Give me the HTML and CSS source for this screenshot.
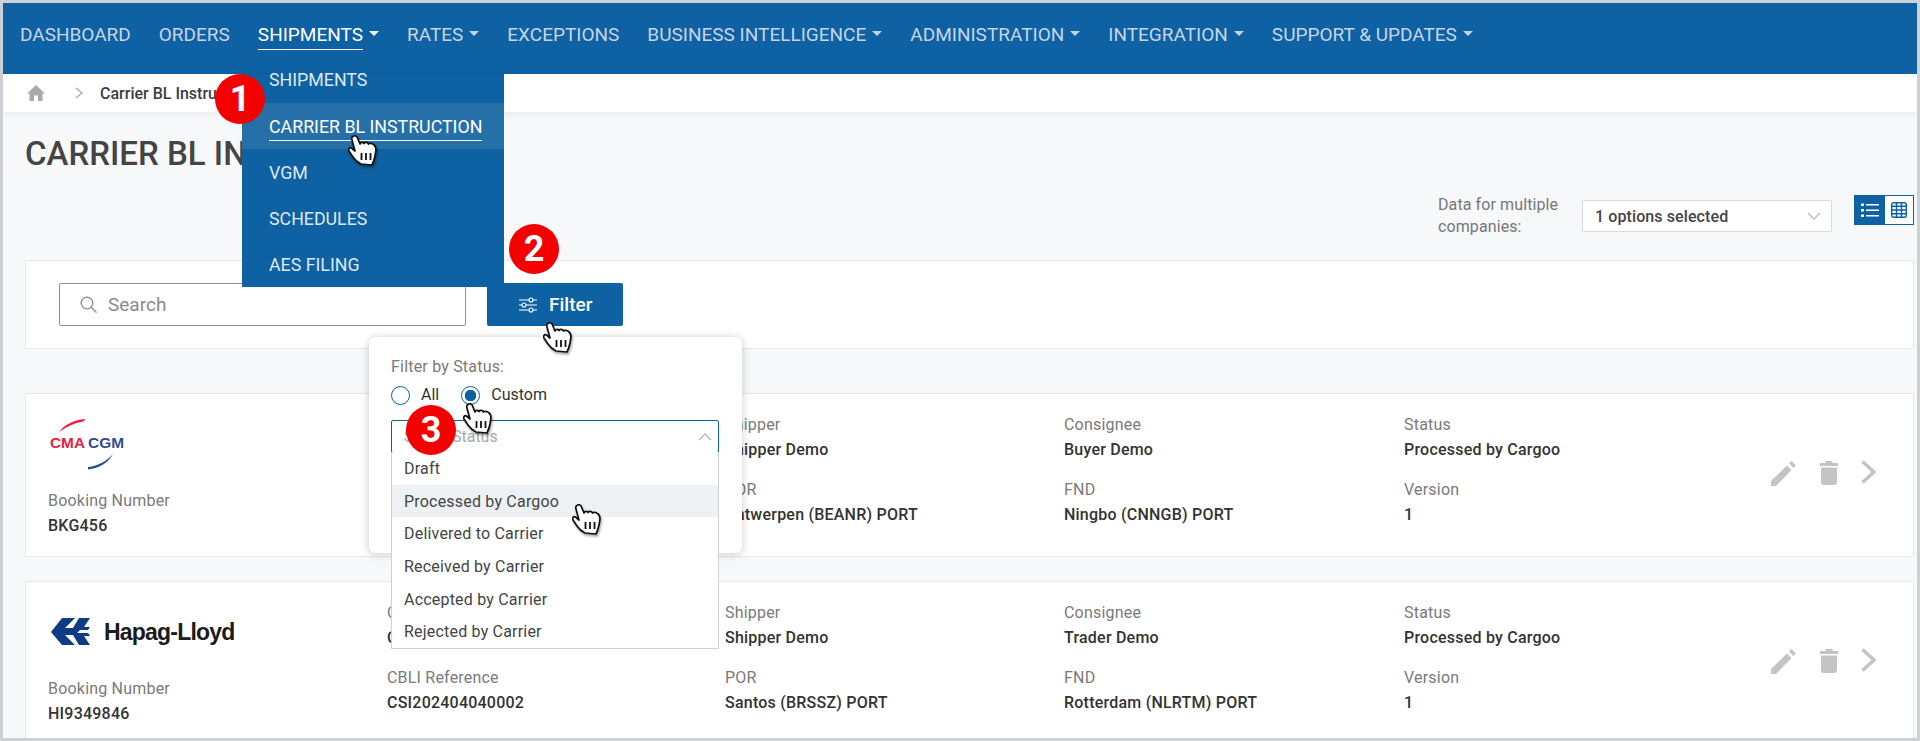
FILE: index.html
```html
<!DOCTYPE html>
<html lang="en">
<head>
<meta charset="utf-8">
<title>Carrier BL Instruction</title>
<link rel="stylesheet" href="styles.css">
</head>
<body>
<svg class="defs" width="0" height="0" aria-hidden="true">
  <symbol id="hand" viewBox="0 0 29 32">
    <path d="M5 1.500C7 0 9 1 9.500 3L12 9C13 7 15 7 16 8.500C17 7 19.500 7 20.500 9C21.500 8 24 8 25.500 9.500C27 10.500 28 12 28 15L27 21C26 26 25 28 24 30L13 29C9 27 7 25 5 22L1 16C0 14 1.500 12 3.500 13L7 16L4 5C3.500 3.500 4 2 5 1.500Z" fill="#fff" stroke="#111" stroke-width="1.700" stroke-linejoin="round"/>
    <path d="M13.500 18V25M18 18V25M22.500 18V25" stroke="#111" stroke-width="1.800" fill="none"/>
  </symbol>
  <symbol id="pencil" viewBox="0 0 25 25">
    <path d="M0 25V20L16 4.500L20.500 9L5 25ZM18 2.500L20.500 0L25 4.500L22.500 7Z" fill="#c4c4c4"/>
  </symbol>
  <symbol id="trash" viewBox="0 0 18 24">
    <path d="M5.500 0H12.500V2H18V5H0V2H5.500ZM1 6.500H17V21C17 23 16 24 14 24H4C2 24 1 23 1 21Z" fill="#c4c4c4"/>
  </symbol>
  <symbol id="next" viewBox="0 0 15 24">
    <path d="M1.500 1.500L13 12L1.500 22.500" fill="none" stroke="#c4c4c4" stroke-width="3.600"/>
  </symbol>
</svg>
<div class="frame">
  <nav class="nav">
    <a class="nav-item">DASHBOARD</a>
    <a class="nav-item">ORDERS</a>
    <a class="nav-item active caret"><span class="nav-label">SHIPMENTS</span></a>
    <a class="nav-item caret">RATES</a>
    <a class="nav-item">EXCEPTIONS</a>
    <a class="nav-item caret">BUSINESS INTELLIGENCE</a>
    <a class="nav-item caret">ADMINISTRATION</a>
    <a class="nav-item caret">INTEGRATION</a>
    <a class="nav-item caret">SUPPORT &amp; UPDATES</a>
  </nav>
  <div class="crumbs">
    <svg class="home" viewBox="0 0 18 16"><path d="M9 0L18 8.500H15.500V16H11V10.500H7V16H2.500V8.500H0Z" fill="#a9a9a9"/></svg>
    <svg class="crumb-sep" viewBox="0 0 8 12"><path d="M1 1L7 6L1 11" fill="none" stroke="#a9a9a9" stroke-width="1.400"/></svg>
    <span class="crumb-text">Carrier BL Instruction</span>
  </div>
  <main class="main">
    <div class="title-row">
      <h1 class="title">CARRIER BL INSTRUCTION</h1>
      <div class="company-label">Data for multiple<br>companies:</div>
      <div class="company-select">
        <span>1 options selected</span>
        <svg class="select-chev" viewBox="0 0 14 8"><path d="M1 1L7 7L13 1" fill="none" stroke="#b5b5b5" stroke-width="1.200"/></svg>
      </div>
      <div class="view-toggle">
        <span class="view-btn on">
          <svg viewBox="0 0 18 16" width="18" height="16"><path d="M0 1.500H3V4H0ZM0 7H3V9.500H0ZM0 12.500H3V15H0ZM5 2H18V3.600H5ZM5 7.500H18V9.100H5ZM5 13H18V14.600H5Z" fill="#fff"/></svg>
        </span>
        <span class="view-btn">
          <svg viewBox="0 0 16 16" width="16" height="16"><rect x=".7" y=".7" width="14.600" height="14.600" rx="2" fill="none" stroke="#0e61a2" stroke-width="1.400"/><path d="M.7 4.200H15.300M.7 8H15.300M.7 11.800H15.300M5.500 1V15M10.500 1V15" stroke="#0e61a2" stroke-width="1.500"/></svg>
        </span>
      </div>
    </div>

    <section class="search-card">
      <div class="search-box">
        <svg class="search-icon" viewBox="0 0 17 17"><circle cx="7" cy="7" r="5.800" fill="none" stroke="#8a8a8a" stroke-width="1.300"/><path d="M11.200 11.200L16.500 16.500" stroke="#8a8a8a" stroke-width="1.300"/></svg>
        <span>Search</span>
      </div>
      <button class="filter-btn">
        <svg viewBox="0 0 18 16" width="18" height="16"><path d="M0 3H10M14 3H18M0 8H3M7 8H18M0 13H10M14 13H18" stroke="#fff" stroke-width="1.100" fill="none"/><circle cx="12" cy="3" r="2" fill="none" stroke="#fff" stroke-width="1.100"/><circle cx="5" cy="8" r="2" fill="none" stroke="#fff" stroke-width="1.100"/><circle cx="12" cy="13" r="2" fill="none" stroke="#fff" stroke-width="1.100"/></svg>
        <span>Filter</span>
      </button>
    </section>

    <article class="card">
      <div class="col">
        <div class="logo">
          <svg class="cma-swoosh" viewBox="0 0 76 52" width="76" height="52"><path d="M11 14C17 6 26 2 37 1C37 2 36 3 35 3.500C26 5 18 9 11 14Z" fill="#e4233e"/><path d="M40 49C50 48 59 43 65 36C60 45 52 50 40 51.500Z" fill="#2f4d8e"/></svg>
          <span class="cma-name"><b class="cma-red">CMA</b><b class="cma-blue">CGM</b></span>
        </div>
        <div class="field"><div class="label">Booking Number</div><div class="value">BKG456</div></div>
      </div>
      <div class="col">
        <div class="field gap"><div class="label">CBLI Number</div><div class="value">CBL456</div></div>
        <div class="field"><div class="label">CBLI Reference</div><div class="value">CSI202404040001</div></div>
      </div>
      <div class="col">
        <div class="field gap"><div class="label">Shipper</div><div class="value">Shipper Demo</div></div>
        <div class="field"><div class="label">POR</div><div class="value">Antwerpen (BEANR) PORT</div></div>
      </div>
      <div class="col">
        <div class="field gap"><div class="label">Consignee</div><div class="value">Buyer Demo</div></div>
        <div class="field"><div class="label">FND</div><div class="value">Ningbo (CNNGB) PORT</div></div>
      </div>
      <div class="col">
        <div class="field gap"><div class="label">Status</div><div class="value">Processed by Cargoo</div></div>
        <div class="field"><div class="label">Version</div><div class="value">1</div></div>
      </div>
      <div class="actions">
        <svg class="act-edit"><use href="#pencil"/></svg>
        <svg class="act-trash"><use href="#trash"/></svg>
        <svg class="act-next"><use href="#next"/></svg>
      </div>
    </article>

    <article class="card">
      <div class="col">
        <div class="logo">
          <svg class="hl-mark" viewBox="0 0 39 27" width="39" height="27"><path d="M11 0H24L14 10H22L28 0H39L33 9H39L37 12H29L26 15H37L39 18H33L39 27H28L22 17H14L24 27H11L0 14Z" fill="#0d3b84"/></svg>
          <span class="hl-name">Hapag-Lloyd</span>
        </div>
        <div class="field"><div class="label">Booking Number</div><div class="value">HI9349846</div></div>
      </div>
      <div class="col">
        <div class="field gap"><div class="label">CBLI Number</div><div class="value">CBL9349846</div></div>
        <div class="field"><div class="label">CBLI Reference</div><div class="value">CSI202404040002</div></div>
      </div>
      <div class="col">
        <div class="field gap"><div class="label">Shipper</div><div class="value">Shipper Demo</div></div>
        <div class="field"><div class="label">POR</div><div class="value">Santos (BRSSZ) PORT</div></div>
      </div>
      <div class="col">
        <div class="field gap"><div class="label">Consignee</div><div class="value">Trader Demo</div></div>
        <div class="field"><div class="label">FND</div><div class="value">Rotterdam (NLRTM) PORT</div></div>
      </div>
      <div class="col">
        <div class="field gap"><div class="label">Status</div><div class="value">Processed by Cargoo</div></div>
        <div class="field"><div class="label">Version</div><div class="value">1</div></div>
      </div>
      <div class="actions">
        <svg class="act-edit"><use href="#pencil"/></svg>
        <svg class="act-trash"><use href="#trash"/></svg>
        <svg class="act-next"><use href="#next"/></svg>
      </div>
    </article>
  </main>

  <ul class="nav-menu">
    <li class="menu-item"><span>SHIPMENTS</span></li>
    <li class="menu-item hover"><span>CARRIER BL INSTRUCTION</span></li>
    <li class="menu-item"><span>VGM</span></li>
    <li class="menu-item"><span>SCHEDULES</span></li>
    <li class="menu-item"><span>AES FILING</span></li>
  </ul>

  <div class="popover">
    <div class="pop-title">Filter by Status:</div>
    <div class="radios">
      <span class="radio"></span><span class="radio-text">All</span>
      <span class="radio checked"></span><span class="radio-text">Custom</span>
    </div>
    <div class="status-select">
      <span>Select Status</span>
      <svg class="select-chev" viewBox="0 0 14 8"><path d="M1 7L7 1L13 7" fill="none" stroke="#b5b5b5" stroke-width="1.300"/></svg>
    </div>
  </div>
  <ul class="status-list">
    <li>Draft</li>
    <li class="hover">Processed by Cargoo</li>
    <li>Delivered to Carrier</li>
    <li>Received by Carrier</li>
    <li>Accepted by Carrier</li>
    <li>Rejected by Carrier</li>
  </ul>

  <span class="badge b1">1</span>
  <span class="badge b2">2</span>
  <span class="badge b3">3</span>
  <svg class="cursor c1"><use href="#hand"/></svg>
  <svg class="cursor c2"><use href="#hand"/></svg>
  <svg class="cursor c3"><use href="#hand"/></svg>
  <svg class="cursor c4"><use href="#hand"/></svg>
</div>
</body>
</html>
```
FILE: styles.css
```css
* { box-sizing: border-box; }
html, body { margin: 0; padding: 0; }
body { font-family: Roboto, "Liberation Sans", sans-serif; color: #333; background: #fff; }
.defs { position: absolute; }
.frame {
  position: relative;
  width: 1920px;
  height: 741px;
  border: 3px solid #cdd0d4;
  overflow: hidden;
  background: #f7f8fa;
}
ul { list-style: none; margin: 0; padding: 0; }

.nav {
  height: 71px;
  background: #0e61a2;
  display: flex;
  gap: 28px;
  padding: 19px 0 0 17px;
  font-size: 19px;
  line-height: 25px;
  color: #c6d5e6;
}
.nav-item { display: flex; height: 30px; align-items: flex-start; white-space: nowrap; }
.nav-item.caret::after {
  content: "";
  margin: 9px 0 0 6px;
  border-left: 5px solid transparent;
  border-right: 5px solid transparent;
  border-top: 5px solid currentColor;
}
.nav-item.active { color: #fff; }
.nav-label { border-bottom: 1.5px solid #fff; height: 28px; }

.crumbs {
  height: 38px;
  background: #fff;
  display: flex;
  align-items: center;
  padding-left: 24px;
  box-shadow: 0 2px 6px rgba(0, 0, 0, .06);
  position: relative;
}
.home { width: 18px; height: 16px; }
.crumb-sep { width: 8px; height: 12px; margin-left: 30px; }
.crumb-text { margin-left: 17px; font-size: 16px; font-weight: 500; color: #3c3c3c; }

.main { padding: 0 3px 0 22px; }
.title-row { height: 148px; display: flex; align-items: flex-start; position: relative; }
.title {
  margin: 25px 0 0;
  font-size: 33px;
  line-height: 34px;
  font-weight: 500;
  color: #444;
  flex: 1;
  white-space: nowrap;
}
.company-label { margin-top: 82px; font-size: 16px; line-height: 22px; color: #777; width: 144px; letter-spacing: .1px; }
.company-select {
  margin-top: 88px;
  width: 250px;
  height: 32px;
  background: #fff;
  border: 1px solid #d8dadd;
  border-radius: 2px;
  display: flex;
  align-items: center;
  justify-content: space-between;
  padding: 0 10px 0 12px;
  font-size: 16px;
  font-weight: 480;
  letter-spacing: .1px;
  color: #444;
}
.select-chev { width: 14px; height: 8px; }
.view-toggle {
  margin: 83px 0 0 22px;
  width: 60px;
  height: 30px;
  display: flex;
  border: 1px solid #0e61a2;
  background: #fff;
}
.view-btn { flex: 1; display: flex; align-items: center; justify-content: center; }
.view-btn.on { background: #0e61a2; flex: 0 0 30px; }

.search-card {
  height: 89px;
  background: #fff;
  border: 1px solid #e6e8ea;
  display: flex;
  align-items: flex-start;
  padding: 22px 0 0 33px;
  gap: 21px;
}
.search-box {
  width: 407px;
  height: 43px;
  border: 1.5px solid #8f8f8f;
  border-radius: 2px;
  display: flex;
  align-items: center;
  padding-left: 20px;
  gap: 11px;
  font-size: 19px;
  color: #8a8a8a;
}
.search-icon { width: 17px; height: 17px; }
.filter-btn {
  width: 136px;
  height: 43px;
  border: 0;
  border-radius: 2px;
  background: #0e61a2;
  color: #fff;
  font: 500 19px Roboto, sans-serif;
  display: flex;
  align-items: center;
  padding: 0 0 0 32px;
  gap: 12px;
}

.card {
  height: 164px;
  margin-top: 44px;
  background: #fff;
  border: 1px solid #e6e8ea;
  display: grid;
  grid-template-columns: 339px 338px 339px 340px 367px 1fr;
  padding: 19px 0 0 22px;
}
.card + .card { margin-top: 24px; }
.logo { height: 76px; position: relative; }
.field { height: 49px; }
.field.gap { margin-bottom: 16px; }
.label { font-size: 16px; line-height: 24px; color: #7a7a7a; letter-spacing: .2px; }
.value { font-size: 16px; line-height: 25px; font-weight: 480; color: #333; letter-spacing: .22px; white-space: nowrap; }

.actions { display: flex; align-items: flex-start; padding-top: 48px; }
.act-edit { width: 25px; height: 25px; margin-right: 24px; }
.act-trash { width: 18px; height: 24px; margin-right: 23px; }
.act-next { width: 15px; height: 24px; margin-top: -1px; }

.cma-swoosh { position: absolute; left: 0; top: 5px; }
.cma-name { position: absolute; left: 2px; top: 20px; display: flex; gap: 3px; font: 700 15.4px/20px "Liberation Sans", sans-serif; }
.cma-red { color: #e4233e; }
.cma-blue { color: #2f4d8e; }
.hl-mark { position: absolute; left: 3px; top: 17px; }
.hl-name { position: absolute; left: 56px; top: 17px; font: 700 23px/28px "Liberation Sans", sans-serif; letter-spacing: -.8px; color: #1b1b1b; }

.nav-menu {
  position: absolute;
  left: 239px;
  top: 71px;
  width: 262px;
  height: 213px;
  background: #0e61a2;
  color: #dfe8f2;
}
.menu-item { height: 46px; padding: 0 0 0 27px; display: flex; align-items: center; font-size: 17.8px; }
.menu-item:first-child { height: 29px; align-items: flex-start; line-height: 12px; }
.menu-item.hover { background: #2670a9; color: #fff; }
.menu-item.hover span { border-bottom: 1.5px solid #fff; margin-top: 4px; padding-bottom: 3px; }

.popover {
  position: absolute;
  left: 366px;
  top: 334px;
  width: 373px;
  height: 216px;
  background: #fff;
  border-radius: 6px;
  box-shadow: 0 1px 8px rgba(0, 0, 0, .22);
  padding: 20px 22px 0;
}
.pop-title { font-size: 16px; line-height: 20px; color: #7a7a7a; letter-spacing: .2px; }
.radios { display: flex; align-items: center; margin-top: 8px; font-size: 16px; line-height: 20px; color: #333; }
.radio { width: 19px; height: 19px; border-radius: 50%; border: 1.5px solid #0e61a2; background: #fff; }
.radio.checked { background: radial-gradient(circle, #0e61a2 0 5.500px, #fff 6px); }
.radio-text { margin: 0 22px 0 11px; }
.status-select {
  margin-top: 15px;
  width: 328px;
  height: 33px;
  border: 1.5px solid #0e61a2;
  border-radius: 2px;
  display: flex;
  align-items: center;
  justify-content: space-between;
  padding: 0 6px 0 12px;
  font-size: 16px;
  color: #a8a8a8;
}
.status-list {
  position: absolute;
  left: 388px;
  top: 449px;
  width: 328px;
  height: 197px;
  background: #fff;
  border: 1px solid #cfd2d5;
  border-top: 0;
  font-size: 16px;
  color: #444;
}
.status-list li { height: 32.700px; padding-left: 12px; display: flex; align-items: center; letter-spacing: .2px; }
.status-list li.hover { background: #edf1f3; }

.badge {
  position: absolute;
  width: 50px;
  height: 50px;
  border-radius: 50%;
  background: #f50000;
  color: #fff;
  font: 700 36px/50px Roboto, sans-serif;
  text-align: center;
}
.b1 { left: 212px; top: 71px; }
.b2 { left: 506px; top: 221px; }
.b3 { left: 403px; top: 402px; }

.cursor { position: absolute; width: 29px; height: 32px; filter: drop-shadow(1px 2px 1px rgba(0, 0, 0, .35)); }
.c1 { left: 345px; top: 132px; }
.c2 { left: 540px; top: 319px; }
.c3 { left: 460px; top: 400px; }
.c4 { left: 569px; top: 501px; }
```
